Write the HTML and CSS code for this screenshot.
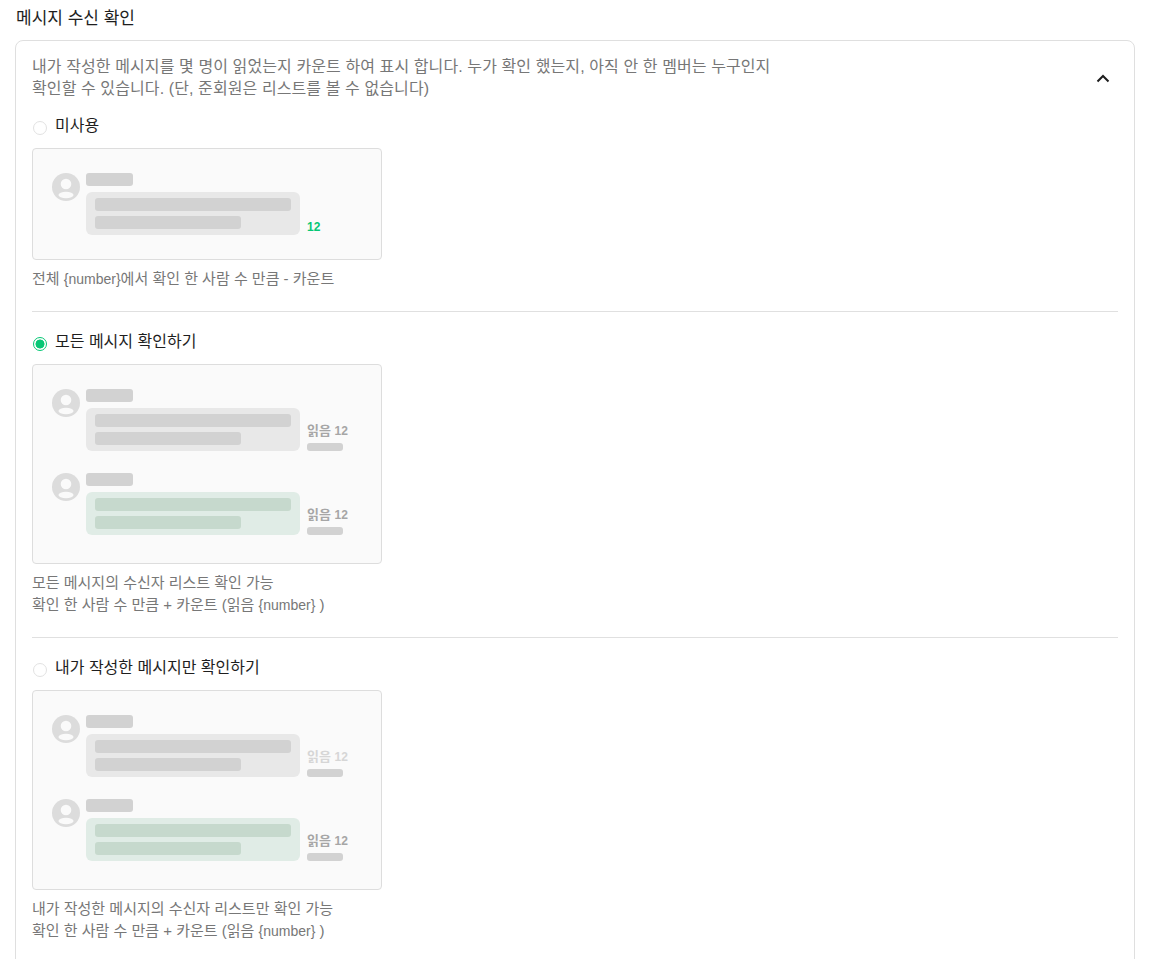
FILE: index.html
```html
<!DOCTYPE html>
<html lang="ko">
<head>
<meta charset="utf-8">
<title>메시지 수신 확인</title>
<link rel="stylesheet" href="styles.css">
</head>
<body>
<h2 class="title">메시지 수신 확인</h2>
<div class="card">
  <div class="head">
    <p class="intro">내가 작성한 메시지를 몇 명이 읽었는지 카운트 하여 표시 합니다. 누가 확인 했는지, 아직 안 한 멤버는 누구인지<br>확인할 수 있습니다. (단, 준회원은 리스트를 볼 수 없습니다)</p>
    <svg class="chevron" width="14" height="9" viewBox="0 0 14 9"><path d="M1.5 7.5 7 2l5.5 5.5" fill="none" stroke="#1e1e1e" stroke-width="2"/></svg>
  </div>

  <section class="option first">
    <label class="radio-row"><span class="radio"></span>미사용</label>
    <div class="preview">
      <div class="msg">
        <svg class="avatar" width="28" height="28" viewBox="0 0 28 28"><circle cx="14" cy="14" r="14" fill="#dcdcdc"/><circle cx="14" cy="11" r="5.3" fill="#fafafa"/><ellipse cx="14" cy="22" rx="7.5" ry="3.2" fill="#fafafa"/></svg>
        <div class="body">
          <div class="name"></div>
          <div class="bubble"><div class="line long"></div><div class="line short"></div></div>
        </div>
        <div class="count">12</div>
      </div>
    </div>
    <p class="desc">전체 <span class="latin">{number}</span>에서 확인 한 사람 수 만큼 - 카운트</p>
  </section>

  <section class="option">
    <label class="radio-row"><span class="radio on"></span>모든 메시지 확인하기</label>
    <div class="preview multi">
      <div class="msg">
        <svg class="avatar" width="28" height="28" viewBox="0 0 28 28"><circle cx="14" cy="14" r="14" fill="#dcdcdc"/><circle cx="14" cy="11" r="5.3" fill="#fafafa"/><ellipse cx="14" cy="22" rx="7.5" ry="3.2" fill="#fafafa"/></svg>
        <div class="body">
          <div class="name"></div>
          <div class="bubble"><div class="line long"></div><div class="line short"></div></div>
        </div>
        <div class="read"><span class="read-label">읽음 <span class="num">12</span></span><span class="read-bar"></span></div>
      </div>
      <div class="msg">
        <svg class="avatar" width="28" height="28" viewBox="0 0 28 28"><circle cx="14" cy="14" r="14" fill="#dcdcdc"/><circle cx="14" cy="11" r="5.3" fill="#fafafa"/><ellipse cx="14" cy="22" rx="7.5" ry="3.2" fill="#fafafa"/></svg>
        <div class="body">
          <div class="name"></div>
          <div class="bubble mine"><div class="line long"></div><div class="line short"></div></div>
        </div>
        <div class="read"><span class="read-label">읽음 <span class="num">12</span></span><span class="read-bar"></span></div>
      </div>
    </div>
    <p class="desc">모든 메시지의 수신자 리스트 확인 가능<br>확인 한 사람 수 만큼 + 카운트 (읽음 <span class="latin">{number}</span> )</p>
  </section>

  <section class="option">
    <label class="radio-row"><span class="radio"></span>내가 작성한 메시지만 확인하기</label>
    <div class="preview multi">
      <div class="msg">
        <svg class="avatar" width="28" height="28" viewBox="0 0 28 28"><circle cx="14" cy="14" r="14" fill="#dcdcdc"/><circle cx="14" cy="11" r="5.3" fill="#fafafa"/><ellipse cx="14" cy="22" rx="7.5" ry="3.2" fill="#fafafa"/></svg>
        <div class="body">
          <div class="name"></div>
          <div class="bubble"><div class="line long"></div><div class="line short"></div></div>
        </div>
        <div class="read"><span class="read-label faded">읽음 <span class="num">12</span></span><span class="read-bar"></span></div>
      </div>
      <div class="msg">
        <svg class="avatar" width="28" height="28" viewBox="0 0 28 28"><circle cx="14" cy="14" r="14" fill="#dcdcdc"/><circle cx="14" cy="11" r="5.3" fill="#fafafa"/><ellipse cx="14" cy="22" rx="7.5" ry="3.2" fill="#fafafa"/></svg>
        <div class="body">
          <div class="name"></div>
          <div class="bubble mine"><div class="line long"></div><div class="line short"></div></div>
        </div>
        <div class="read"><span class="read-label">읽음 <span class="num">12</span></span><span class="read-bar"></span></div>
      </div>
    </div>
    <p class="desc">내가 작성한 메시지의 수신자 리스트만 확인 가능<br>확인 한 사람 수 만큼 + 카운트 (읽음 <span class="latin">{number}</span> )</p>
  </section>
</div>
</body>
</html>
```
FILE: styles.css
```css
* { box-sizing: border-box; }
html, body { background: #fff; }
body {
  margin: 0;
  padding: 8px 18px 0 15px;
  font-family: "Liberation Sans", "Noto Sans CJK KR", sans-serif;
  color: #1e1e1e;
}
.title {
  margin: 0 0 10px 1px;
  font-size: 17px;
  font-weight: 400;
  line-height: 22px;
}
.card {
  border: 1px solid #dfdfdf;
  border-radius: 8px;
  padding: 15px 16px 0;
  height: 960px;
}
.head {
  display: flex;
  justify-content: space-between;
  align-items: center;
}
.intro {
  margin: 0;
  font-size: 16px;
  letter-spacing: 0.1px;
  line-height: 22px;
  color: #777;
}
.chevron { margin-right: 8px; }
.option {
  padding: 20px 0 21px;
  border-top: 1px solid #e0e0e0;
}
.option.first {
  border-top: 0;
  padding-top: 16px;
}
.radio-row {
  display: flex;
  align-items: center;
  gap: 8px;
  height: 20px;
  font-size: 16px;
  line-height: 20px;
}
.radio {
  flex: none;
  width: 14px;
  height: 14px;
  margin: 3px 0 0 1px;
  border: 1px solid #e2e2e2;
  border-radius: 50%;
  background: #fff;
}
.radio.on {
  border-color: #06c775;
  background: radial-gradient(circle, #06c775 0 4.2px, #fff 4.8px);
}
.preview {
  width: 350px;
  margin-top: 12px;
  padding: 24px 19px;
  border: 1px solid #dddddd;
  border-radius: 4px;
  background: #fafafa;
  display: flex;
  flex-direction: column;
  gap: 22px;
}
.preview.multi { padding-bottom: 28px; }
.msg {
  display: flex;
  height: 62px;
}
.avatar { flex: none; }
.body {
  width: 214px;
  margin-left: 6px;
}
.name {
  width: 47px;
  height: 13px;
  border-radius: 3px;
  background: #d2d2d2;
}
.bubble {
  height: 43px;
  margin-top: 6px;
  padding: 6px 9px;
  border-radius: 6px;
  background: #e8e8e8;
}
.bubble.mine { background: #e0ece6; }
.line {
  height: 13px;
  border-radius: 3px;
  background: #d2d2d2;
}
.line.long { width: 196px; }
.line.short { width: 146px; margin-top: 5px; }
.mine .line { background: #c6d9cd; }
.count {
  align-self: flex-end;
  margin-left: 7px;
  font-size: 12px;
  line-height: 16px;
  font-weight: 700;
  color: #06c775;
}
.read {
  align-self: flex-end;
  margin-left: 7px;
  display: flex;
  flex-direction: column;
}
.read-label {
  font-size: 13px;
  line-height: 16px;
  font-weight: 700;
  color: #a6a6a6;
}
.read-label.faded { color: #d6d6d6; }
.num { font-size: 12px; }
.read-bar {
  width: 36px;
  height: 8px;
  margin-top: 4px;
  border-radius: 3px;
  background: #d2d2d2;
}
.desc {
  margin: 8px 0 0;
  font-size: 15px;
  line-height: 22px;
  color: #777;
}
.latin { font-size: 14px; }
```
